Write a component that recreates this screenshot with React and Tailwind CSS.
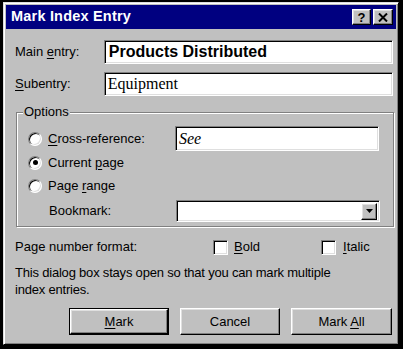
import React from "react";

const raised =
  "bg-[#c0c0c0] border border-t-white border-l-white border-r-black border-b-black shadow-[inset_-1px_-1px_#808080,inset_1px_1px_#dfdfdf]";
const sunken =
  "bg-white border border-t-[#808080] border-l-[#808080] border-r-white border-b-white shadow-[inset_1px_1px_#000,inset_-1px_-1px_#dfdfdf]";

function U({ children }) {
  return <span className="underline underline-offset-2">{children}</span>;
}

function Radio({ checked }) {
  return (
    <span className="w-[14px] h-[14px] rounded-full bg-white border border-t-[#808080] border-l-[#808080] border-r-white border-b-white shadow-[inset_1px_1px_#000,inset_-1px_-1px_#dfdfdf] flex items-center justify-center shrink-0">
      {checked && <span className="w-[5px] h-[5px] rounded-full bg-black" />}
    </span>
  );
}

function Check() {
  return <span className={`w-[15px] h-[15px] shrink-0 ${sunken}`} />;
}

export default function App() {
  return (
    <div
      className="w-[403px] h-[349px] bg-black pt-[2px] pl-[3px] text-[13px] text-black"
      style={{ fontFamily: '"Liberation Sans", Arial, sans-serif' }}
    >
      <div className="w-[396px] h-[343px] bg-[#c0c0c0] border border-t-[#dfdfdf] border-l-[#dfdfdf] border-r-black border-b-black shadow-[inset_1px_1px_#fff,inset_-1px_-1px_#808080] p-[2px] flex flex-col">
        {/* Title bar */}
        <div className="h-[24px] bg-[#000080] flex items-center pl-[5px] pr-[3px]">
          <span className="text-white font-bold text-[14.5px] tracking-[0.2px]">Mark Index Entry</span>
          <div className="ml-auto flex gap-[2px]">
            <span className={`${raised} w-[19px] h-[16px] flex items-center justify-center font-bold text-[13px] leading-none`}>?</span>
            <span className={`${raised} w-[20px] h-[16px] flex items-center justify-center`}>
              <svg width="10" height="9" viewBox="0 0 10 9">
                <path d="M1 0.5 L9 8.5 M9 0.5 L1 8.5" stroke="#000" strokeWidth="2" />
              </svg>
            </span>
          </div>
        </div>

        <div className="pl-[9px] pr-[3px] flex flex-col">
          {/* Main entry */}
          <div className="mt-[11px] h-[24px] flex items-center">
            <span className="w-[89px]">
              Main <U>e</U>ntry:
            </span>
            <div className={`${sunken} w-[290px] h-[24px] flex items-center pl-[4px] font-bold text-[16px]`}>
              Products Distributed
            </div>
          </div>

          {/* Subentry */}
          <div className="mt-[8px] h-[24px] flex items-center">
            <span className="w-[89px]">
              <U>S</U>ubentry:
            </span>
            <div
              className={`${sunken} w-[290px] h-[24px] flex items-center pl-[3px] text-[16px]`}
              style={{ fontFamily: '"Liberation Serif", "Times New Roman", serif' }}
            >
              Equipment
            </div>
          </div>

          {/* Options group */}
          <div className="relative mt-[16px] ml-[1px] w-[378px] h-[115px] border border-[#808080] shadow-[inset_1px_1px_#fff,1px_1px_#fff] pl-[11px] pr-[13px] pt-[13px] flex flex-col">
            <span className="absolute -top-[9px] left-[6px] px-[1px] bg-[#c0c0c0] leading-[16px]">Options</span>

            <div className="h-[25px] flex items-center">
              <Radio />
              <span className="ml-[6px] w-[127px]">
                <U>C</U>ross-reference:
              </span>
              <div
                className={`${sunken} w-[204px] h-[25px] flex items-center pl-[3px] italic text-[16px]`}
                style={{ fontFamily: '"Liberation Serif", "Times New Roman", serif' }}
              >
                See
              </div>
            </div>

            <div className="h-[23px] flex items-center">
              <Radio checked />
              <span className="ml-[6px]">
                Current <U>p</U>age
              </span>
            </div>

            <div className="h-[23px] flex items-center">
              <Radio />
              <span className="ml-[6px]">
                Page <U>r</U>ange
              </span>
            </div>

            <div className="mt-[3px] h-[22px] flex items-center">
              <span className="ml-[21px] w-[127px]">Bookmark:</span>
              <div className={`${sunken} w-[204px] h-[22px] flex items-center justify-end pr-[2px]`}>
                <span className={`${raised} w-[16px] h-[17px] flex items-center justify-center`}>
                  <svg width="7" height="4" viewBox="0 0 7 4">
                    <path d="M0 0 H7 L3.5 4 Z" fill="#000" />
                  </svg>
                </span>
              </div>
            </div>
          </div>

          {/* Page number format */}
          <div className="mt-[12px] h-[16px] flex items-center">
            <span className="w-[198px]">Page number format:</span>
            <Check />
            <span className="ml-[6px] w-[87px]">
              <U>B</U>old
            </span>
            <Check />
            <span className="ml-[7px]">
              <U>I</U>talic
            </span>
          </div>

          {/* Description */}
          <p className="mt-[9px] leading-[17px] tracking-[-0.2px]">
            This dialog box stays open so that you can mark multiple
            <br />
            index entries.
          </p>

          {/* Buttons */}
          <div className="mt-[10px] ml-[54px] flex gap-[11px]">
            <div className="w-[100px] h-[27px] border border-black">
              <div className={`${raised} w-full h-full flex items-center justify-center`}>
                <span>
                  <U>M</U>ark
                </span>
              </div>
            </div>
            <div className={`${raised} w-[100px] h-[27px] flex items-center justify-center`}>Cancel</div>
            <div className={`${raised} w-[101px] h-[27px] flex items-center justify-center`}>
              <span>
                Mark <U>A</U>ll
              </span>
            </div>
          </div>
        </div>
      </div>
    </div>
  );
}
